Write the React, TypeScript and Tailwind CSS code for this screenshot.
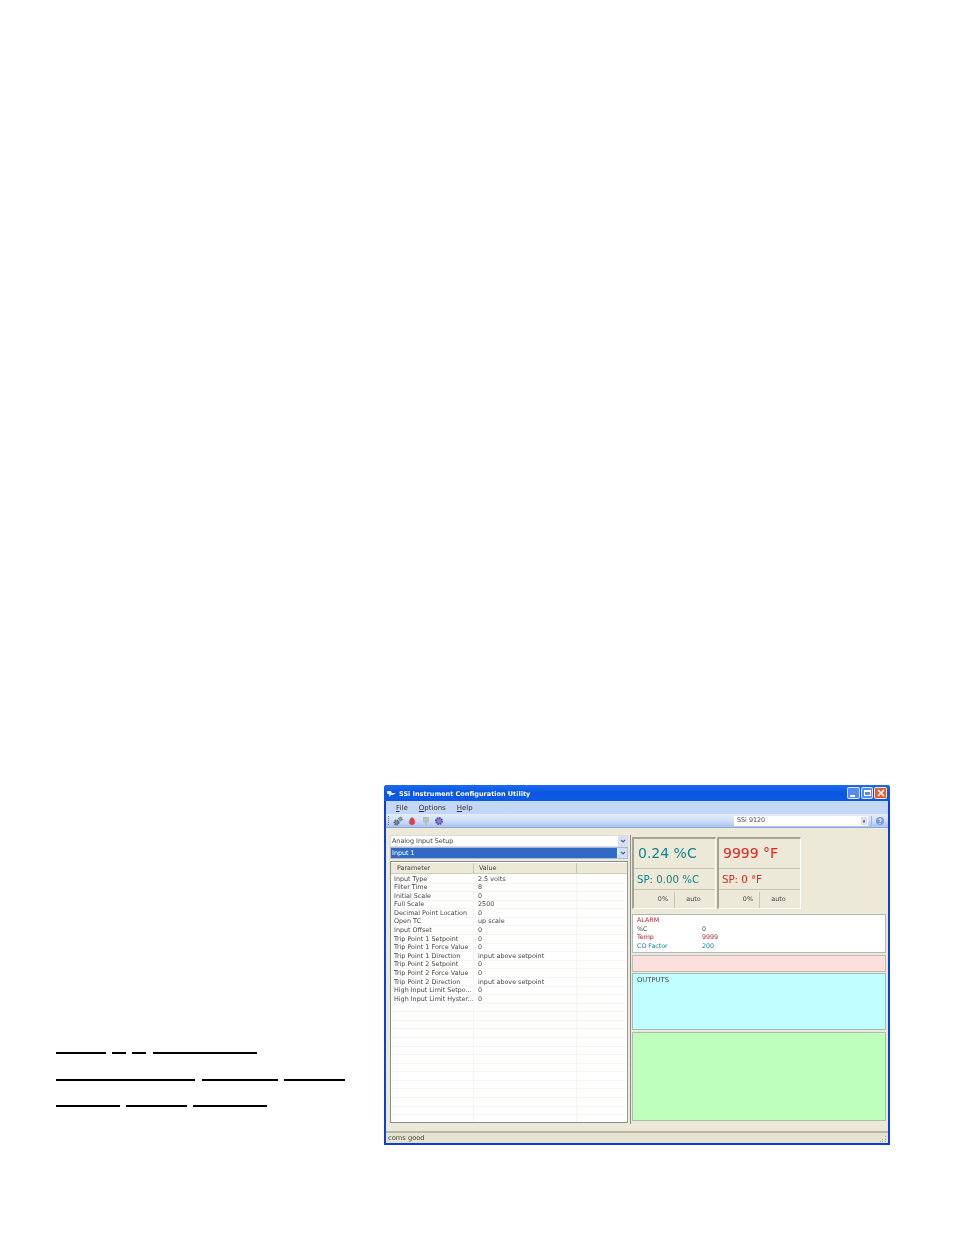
import React from "react";

const rows: [string, string][] = [
  ["Input Type", "2.5 volts"],
  ["Filter Time", "8"],
  ["Initial Scale", "0"],
  ["Full Scale", "2500"],
  ["Decimal Point Location", "0"],
  ["Open TC", "up scale"],
  ["Input Offset", "0"],
  ["Trip Point 1 Setpoint", "0"],
  ["Trip Point 1 Force Value", "0"],
  ["Trip Point 1 Direction", "input above setpoint"],
  ["Trip Point 2 Setpoint", "0"],
  ["Trip Point 2 Force Value", "0"],
  ["Trip Point 2 Direction", "input above setpoint"],
  ["High Input Limit Setpo...", "0"],
  ["High Input Limit Hyster...", "0"],
];
const blanks = Array.from({ length: 14 }, (_, i) => i);

const Chevron = () => (
  <div className="w-[9px] h-full bg-[#d5e0f7] flex items-center justify-center">
    <svg width="6" height="5" viewBox="0 0 6 5"><path d="M1 1l2 2 2-2" fill="none" stroke="#4d6185" strokeWidth="1.2" /></svg>
  </div>
);

const Line = ({ w }: { w: number }) => <div className="h-[2px] bg-black" style={{ width: w }} />;

function Display({ color, value, sp }: { color: string; value: string; sp: string }) {
  return (
    <div className="w-[84px] h-[72px] flex flex-col border-l-2 border-t-2 border-[#a5a392] border-r border-r-white border-b border-b-white" style={{ color }}>
      <div className="h-[30px] flex items-center pl-[4px] text-[14px] border-b border-[#c8c5b2]">{value}</div>
      <div className="h-[21px] flex items-center pl-[3px] text-[10.2px] border-b border-[#c8c5b2] pt-[1px]">{sp}</div>
      <div className="flex-1 flex text-[6.4px] text-[#444] pt-[2px]">
        <div className="w-[41px] border-r border-[#c8c5b2] flex items-center justify-end pr-[6px]">0%</div>
        <div className="flex-1 flex items-center justify-center pr-[3px]">auto</div>
      </div>
    </div>
  );
}

export default function App() {
  return (
    <div className="w-[954px] h-[1235px] bg-white flex font-['DejaVu_Sans',sans-serif]">
      <div className="w-[384px] pl-[56px] pt-[1052px] flex flex-col gap-[24.5px]">
        <div className="flex gap-[6px]"><Line w={50} /><Line w={14} /><Line w={14} /><div className="ml-[1px]"><Line w={104} /></div></div>
        <div className="flex gap-[6.5px]"><Line w={139} /><Line w={76} /><Line w={61} /></div>
        <div className="flex gap-[6px]"><Line w={64} /><Line w={61} /><Line w={74} /></div>
      </div>

      <div className="mt-[785px] w-[506px] h-[360px] bg-[#0a3fd8] rounded-t-[3px] px-[2px] pb-[2px] flex flex-col blur-[0.4px]">
        {/* title bar */}
        <div className="h-[16px] -mx-[2px] px-[3px] pt-[3px] rounded-t-[3px] bg-gradient-to-b from-[#1a6bf0] via-[#0a55e0] to-[#0b5be8] flex items-center text-white text-[6.5px] font-bold">
          <svg width="9" height="8" viewBox="0 0 9 8" className="mr-[3px] -mt-[2px]"><path d="M0 1h4l1 2h4l-3 2H4L2 7 2 4H0z" fill="#dce8ff" /></svg>
          <span className="flex-1">SSi Instrument Configuration Utility</span>
          <div className="flex gap-[1px] -mt-[3px]">
            <div className="w-[13px] h-[12px] rounded-[2px] bg-[#5a8af0] border border-white/80 flex items-end pl-[2px] pb-[1px]"><div className="w-[5px] h-[2px] bg-white" /></div>
            <div className="w-[12px] h-[12px] rounded-[2px] bg-[#5a8af0] border border-white/80 flex items-center justify-center"><div className="w-[7px] h-[6px] border border-white border-t-2" /></div>
            <div className="w-[13px] h-[12px] rounded-[2px] bg-[#e0603a] border border-white/80 flex items-center justify-center">
              <svg width="8" height="8" viewBox="0 0 8 8"><path d="M1 1l6 6M7 1L1 7" stroke="#fff" strokeWidth="1.5" /></svg>
            </div>
          </div>
        </div>
        {/* menu */}
        <div className="h-[13px] bg-[#c5d7f6] flex items-center pl-[10px] pt-[2px] gap-[11px] text-[7px] text-[#333]">
          <span><u>F</u>ile</span><span><u>O</u>ptions</span><span><u>H</u>elp</span>
        </div>
        {/* toolbar */}
        <div className="h-[14px] bg-gradient-to-b from-[#e3edfc] via-[#cfdff8] to-[#a9c3ef] flex items-center pl-[2px] border-b border-[#8fa8d8]">
          <div className="w-[1px] h-[9px] border-l border-dotted border-[#667] mr-[4px]" />
          <svg width="60" height="10" viewBox="0 0 60 10">
            <circle cx="3.5" cy="6.5" r="2.2" fill="#7c8a90" stroke="#55646a" strokeWidth="1.6" strokeDasharray="1.2 0.7" />
            <circle cx="7.5" cy="3" r="1.7" fill="#8c9aa0" stroke="#6f7f85" strokeWidth="1.4" strokeDasharray="1 0.6" />
            <path d="M19 1c2 2 3 3 3 5a3 3 0 0 1-6 0c0-2 1-3 3-5z" fill="#d9434e" />
            <path d="M30 1h6v3a3 3 0 0 1-6 0zM32 7h2v2h-2z" fill="#bcc0b4" />
            <circle cx="46" cy="5" r="3" fill="#8a7fd0" stroke="#5b4bb0" strokeWidth="2" strokeDasharray="1.6 0.7" />
          </svg>
          <div className="ml-auto w-[134px] h-[10px] bg-white flex items-center pl-[3px] pt-[1px] text-[6.4px] text-[#444]">
            <span className="flex-1">SSi 9120</span>
            <div className="w-[6px] h-[8px] mr-[1px] bg-[#d5e0f7] flex items-center justify-center text-[5px] leading-none">▾</div>
          </div>
          <div className="w-[1px] h-[10px] bg-[#9db4dd] mx-[3px]" />
          <svg width="10" height="10" viewBox="0 0 10 10" className="mr-[3px]"><circle cx="5" cy="5" r="4" fill="#7e9ad6" /><path d="M3.7 4c.2-1.4 2.6-1.4 2.6 0 0 1-1.3 1-1.3 2" stroke="#fff" fill="none" /><circle cx="5" cy="7.6" r=".6" fill="#fff" /></svg>
        </div>
        {/* body */}
        <div className="flex-1 min-h-0 bg-[#ece9d8] flex pt-[7px] pl-[4px] pr-[2px] pb-[8px]">
          {/* left */}
          <div className="w-[238px] flex flex-col text-[6.4px] text-[#444]">
            <div className="h-[12px] bg-white border border-[#dcdcd0] flex items-center pl-[1px]">
              <span className="flex-1 pt-[1px]">Analog Input Setup</span><Chevron />
            </div>
            <div className="h-[12px] bg-white border border-[#a9bce0] flex items-center">
              <span className="flex-1 h-full bg-[#316ac5] text-white flex items-center pl-[1px] pt-[1px] mr-[1px]">Input 1</span><Chevron />
            </div>
            <div className="mt-[2px] flex-1 bg-white border border-[#8d8f86] border-r-[#9a9c92] overflow-hidden">
              <div className="h-[11px] mt-[1px] bg-[#ece9d8] flex items-center border-b border-[#cfccbb]">
                <div className="w-[83px] pl-[6px] pt-[1px] border-r border-[#c6c3b2] h-full flex items-center">Parameter</div>
                <div className="w-[103px] pl-[5px] pt-[1px] border-r border-[#c6c3b2] h-full flex items-center">Value</div>
              </div>
              <div className="pt-[1px]">
                {rows.map(([k, v]) => (
                  <div key={k} className="h-[8.58px] flex items-center border-b border-[#f6f5ee] leading-none">
                    <div className="w-[83px] pl-[3px] whitespace-nowrap overflow-hidden border-r border-[#f6f5ee] h-full flex items-center">{k}</div>
                    <div className="w-[103px] pl-[4px] whitespace-nowrap border-r border-[#f6f5ee] h-full flex items-center">{v}</div>
                  </div>
                ))}
                {blanks.map((i) => (
                  <div key={i} className="h-[8.58px] flex border-b border-[#f6f5ee]">
                    <div className="w-[83px] border-r border-[#f6f5ee]" />
                    <div className="w-[103px] border-r border-[#f6f5ee]" />
                  </div>
                ))}
              </div>
            </div>
          </div>
          {/* right */}
          <div className="ml-[2px] pl-[1px] border-l border-[#8d8f86] flex-1 flex flex-col -mb-[1px]">
            <div className="mt-[2px] flex gap-[1px]">
              <Display color="#12868a" value="0.24 %C" sp="SP: 0.00 %C" />
              <Display color="#e5231f" value="9999 °F" sp="SP: 0 °F" />
            </div>
            <div className="mt-[5px] h-[39px] bg-white border border-[#b2bcb6] pl-[4px] pt-[1px] text-[6.3px] leading-[8.6px] grid grid-cols-[65px_1fr] content-start text-[#444]">
              <span className="col-span-2 text-[#a3262a]">ALARM</span>
              <span>%C</span><span>0</span>
              <span className="text-[#a3262a]">Temp</span><span className="text-[#a3262a]">9999</span>
              <span className="text-[#12808a]">CO Factor</span><span className="text-[#12808a]">200</span>
            </div>
            <div className="mt-[2px] h-[17px] bg-[#fde0dc] border border-[#b9bfb6]" />
            <div className="mt-[1px] h-[57px] bg-[#bfffff] border border-[#a8b8b4] pl-[4px] pt-[1px] text-[6.8px] text-[#444]">OUTPUTS</div>
            <div className="mt-[2px] h-[89px] bg-[#bfffbc] border border-[#a8c0ae]" />
          </div>
        </div>
        {/* status */}
        <div className="h-[12px] bg-[#e6e3d1] border-t-2 border-[#b9b6a3] flex items-center pl-[2px] pt-[1px] text-[6.7px] text-[#444]">
          <span className="flex-1">coms good</span>
          <svg width="8" height="8" viewBox="0 0 8 8" className="mr-[1px]"><path d="M6 1h1v1H6zM6 4h1v1H6zM3 4h1v1H3zM6 6h1v1H6zM3 6h1v1H3zM1 6h1v1H1z" fill="#b5b2a0" /></svg>
        </div>
      </div>
    </div>
  );
}
